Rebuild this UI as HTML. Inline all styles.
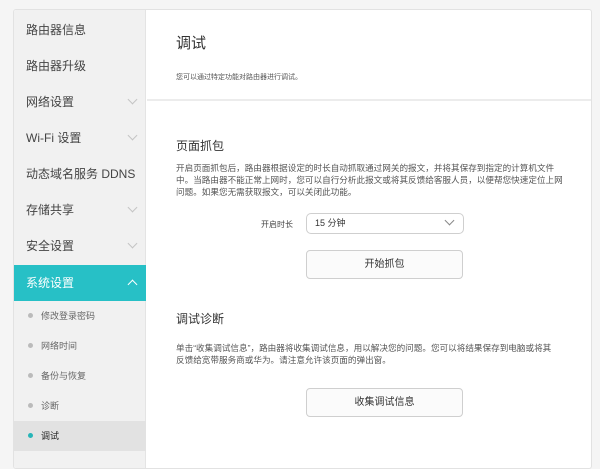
<!DOCTYPE html>
<html><head><meta charset="utf-8"><style>
*{margin:0;padding:0;box-sizing:border-box}
body{width:600px;height:456px;overflow:hidden;background:#f5f5f5;font-family:"Liberation Sans","Noto Sans CJK SC",sans-serif;position:relative}
.box{position:absolute;left:13px;top:9px;width:579px;height:460px;border:1px solid #e2e2e2;border-radius:3px;background:#fff;overflow:hidden}
.side{position:absolute;left:0;top:0;width:132px;height:460px;background:#f1f1f1;border-right:1px solid #e4e4e4}
.it{position:absolute;left:0;width:132px;height:36px;line-height:36px;padding-left:12px;font-size:12px;color:#444}
.it i{position:absolute;right:10px;top:12px;width:7px;height:7px;border-right:1px solid #c4c4c4;border-bottom:1px solid #c4c4c4;transform:rotate(45deg)}
.act{background:#27c0c6;color:#fff}
.act i{border-color:#fff;transform:rotate(-135deg);top:16px}
.sub{position:absolute;left:0;width:132px;height:30px;line-height:30px;padding-left:27px;font-size:9px;color:#666}
.sub:before{content:"";position:absolute;left:14px;top:12px;width:5px;height:5px;border-radius:50%;background:#bbb}
.sub.on{background:#e2e2e2;color:#222}
.sub.on:before{background:#27b5b8}
.c{position:absolute;left:162px;font-size:8px;color:#444}
.p{width:390px;line-height:12px;font-size:8.6px;color:#555;white-space:nowrap}
.btn{position:absolute;width:157px;height:29px;border:1px solid #cfcfcf;border-radius:4px;background:#fbfbfb;text-align:center;line-height:27px;font-size:10px;color:#333}
</style></head><body>
<div class="box">
<div class="side">
<div class="it" style="top:2px">路由器信息</div>
<div class="it" style="top:38px">路由器升级</div>
<div class="it" style="top:74px">网络设置<i></i></div>
<div class="it" style="top:110px">Wi-Fi 设置<i></i></div>
<div class="it" style="top:146px">动态域名服务 DDNS</div>
<div class="it" style="top:182px">存储共享<i></i></div>
<div class="it" style="top:218px">安全设置<i></i></div>
<div class="it act" style="top:255px">系统设置<i></i></div>
<div class="sub" style="top:291px">修改登录密码</div>
<div class="sub" style="top:321px">网络时间</div>
<div class="sub" style="top:351px">备份与恢复</div>
<div class="sub" style="top:381px">诊断</div>
<div class="sub on" style="top:411px">调试</div>
</div>
<div style="position:absolute;left:133px;top:89px;width:446px;height:2px;background:#ececec"></div>
<div class="c" style="top:22px;font-size:15px;color:#333">调试</div>
<div class="c" style="top:62px;font-size:7px;color:#555">您可以通过特定功能对路由器进行调试。</div>
<div class="c" style="top:127px;font-size:12px;color:#333">页面抓包</div>
<div class="c p" style="top:152px">开启页面抓包后，路由器根据设定的时长自动抓取通过网关的报文，并将其保存到指定的计算机文件<br>中。当路由器不能正常上网时，您可以自行分析此报文或将其反馈给客服人员，以便帮您快速定位上网<br>问题。如果您无需获取报文，可以关闭此功能。</div>
<div class="c" style="top:209px;left:247px;color:#444">开启时长</div>
<div style="position:absolute;left:292px;top:203px;width:158px;height:21px;border:1px solid #cfcfcf;border-radius:5px;font-size:9px;line-height:19px;padding-left:8px;color:#333">15 分钟<span style="position:absolute;right:10px;top:3px;width:7px;height:7px;border-right:1px solid #888;border-bottom:1px solid #888;transform:rotate(45deg)"></span></div>
<div class="btn" style="left:292px;top:240px">开始抓包</div>
<div class="c" style="top:300px;font-size:12px;color:#333">调试诊断</div>
<div class="c p" style="top:332px">单击“收集调试信息”，路由器将收集调试信息，用以解决您的问题。您可以将结果保存到电脑或将其<br>反馈给宽带服务商或华为。请注意允许该页面的弹出窗。</div>
<div class="btn" style="left:292px;top:378px">收集调试信息</div>
</div>
</body></html>
